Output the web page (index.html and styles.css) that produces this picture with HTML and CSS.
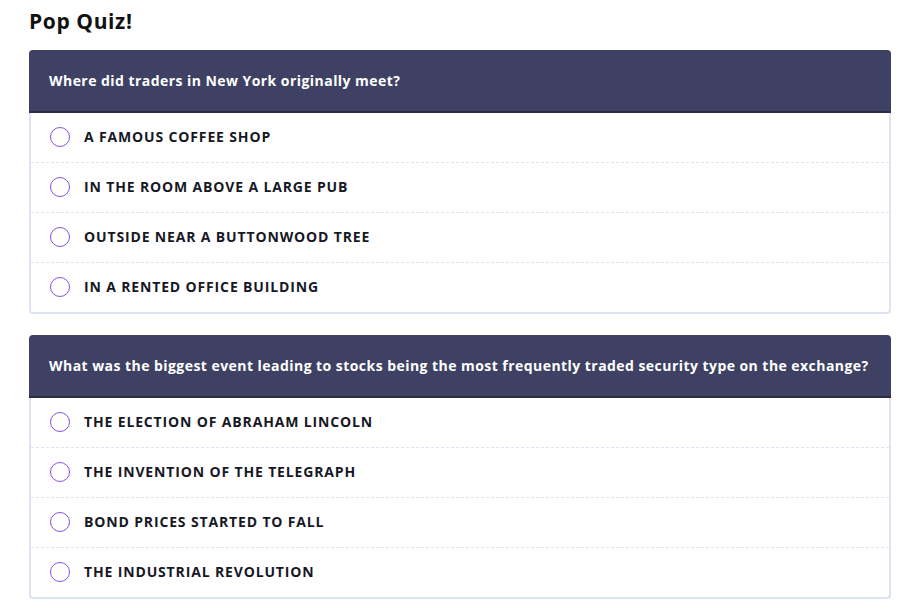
FILE: index.html
```html
<!DOCTYPE html>
<html>
<head>
<meta charset="utf-8">
<link rel="stylesheet" href="styles.css">
</head>
<body>
<div class="page">
  <h1 class="title">Pop Quiz!</h1>
  <section class="card">
    <div class="q">Where did traders in New York originally meet?</div>
    <ul class="opts">
      <li class="opt"><span class="radio"></span><span class="lbl">A famous coffee shop</span></li>
      <li class="opt"><span class="radio"></span><span class="lbl">In the room above a large pub</span></li>
      <li class="opt"><span class="radio"></span><span class="lbl">Outside near a buttonwood tree</span></li>
      <li class="opt"><span class="radio"></span><span class="lbl">In a rented office building</span></li>
    </ul>
  </section>
  <section class="card">
    <div class="q">What was the biggest event leading to stocks being the most frequently traded security type on the exchange?</div>
    <ul class="opts">
      <li class="opt"><span class="radio"></span><span class="lbl">The election of Abraham Lincoln</span></li>
      <li class="opt"><span class="radio"></span><span class="lbl">The invention of the telegraph</span></li>
      <li class="opt"><span class="radio"></span><span class="lbl">Bond prices started to fall</span></li>
      <li class="opt"><span class="radio"></span><span class="lbl">The industrial revolution</span></li>
    </ul>
  </section>
</div>
</body>
</html>
```

FILE: styles.css
```css
html, body {
  margin: 0;
  padding: 0;
  background: #ffffff;
}
body {
  font-family: "Open Sans", "DejaVu Sans", sans-serif;
  color: #171826;
}
.page {
  padding: 6px 29px 0 29px;
  display: flex;
  flex-direction: column;
}
.title {
  margin: 0 0 14px 0;
  font-size: 21px;
  line-height: 30px;
  font-weight: 700;
  letter-spacing: 0.6px;
  color: #111111;
}
.card {
  margin-bottom: 21px;
  display: flex;
  flex-direction: column;
}
.q {
  background: #3e4163;
  color: #ffffff;
  font-weight: 700;
  font-size: 14px;
  letter-spacing: 0.45px;
  height: 61px;
  display: flex;
  align-items: center;
  padding: 0 20px;
  border-radius: 4px 4px 0 0;
  border-bottom: 2px solid #2a2c44;
}
.opts {
  list-style: none;
  margin: 0;
  padding: 0;
  border: 2px solid #dde3f3;
  border-top: none;
  border-radius: 0 0 4px 4px;
}
.opt {
  height: 49px;
  display: flex;
  align-items: center;
  padding-left: 19px;
  border-bottom: 1px dashed #dfe4f2;
}
.opt:last-child {
  border-bottom: none;
}
.radio {
  width: 18px;
  height: 18px;
  border: 1.5px solid #8753e6;
  border-radius: 50%;
  flex: none;
  margin-top: -1px;
}
.lbl {
  margin-left: 14px;
  text-transform: uppercase;
  font-weight: 700;
  font-size: 14px;
  letter-spacing: 0.85px;
  margin-top: -2px;
}
```
